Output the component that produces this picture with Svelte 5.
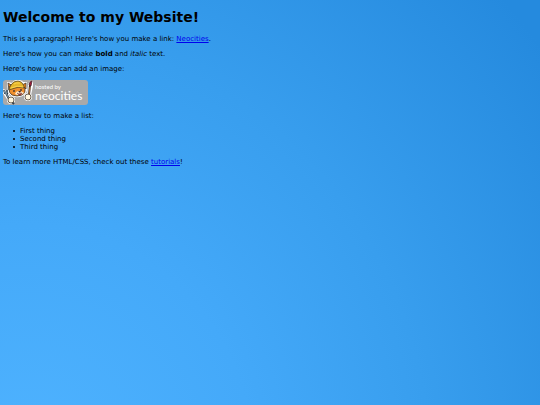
<script>
	const things = ['First thing', 'Second thing', 'Third thing'];
</script>

<svelte:head>
	<title>Welcome to my Website!</title>
</svelte:head>

<main>
	<h1>Welcome to my Website!</h1>

	<p>This is a paragraph! Here's how you make a link: <a href="https://neocities.org">Neocities</a>.</p>

	<p>Here's how you can make <strong>bold</strong> and <em>italic</em> text.</p>

	<p>Here's how you can add an image:</p>

	<svg class="badge" viewBox="0 0 85 25" role="img" aria-label="Hosted by Neocities">
		<rect width="85" height="25" rx="3" fill="#a9a9a9" />

		<!-- white sticker edge behind the cat -->
		<g fill="#fff" stroke="#fff" stroke-width="2" stroke-linejoin="round">
			<path d="m5 3 4 1q2-3 6-3 3 0 5 2l3 0 0 7q-1 5-7 6-7 1-10-4Z" />
			<path d="m27 3 2-1 0 4-2 9-2 0 1-10Z" />
			<path d="m1 10 3 3 3 6-2 0-4-6Z" />
			<circle cx="8" cy="20" r="3" />
			<circle cx="25" cy="17" r="3" />
		</g>

		<!-- head and ears -->
		<path d="m5 3 5 3-4 4ZM19 5l4-2v6Z" fill="#e98522" stroke="#41352b" stroke-width=".8" />
		<path d="M6 9q0-5 7-5 7 0 9 5 1 4-3 6-5 2-10 0-3-2-3-6Z" fill="#f08f2c" stroke="#41352b" stroke-width=".8" />
		<path d="M12 14q1-3 4-3 3 0 5 2-2 2-5 2-3 0-4-1Z" fill="#ffeacb" />

		<!-- helmet -->
		<path d="M8 5q2-4 7-4 4 0 6 5v2q-6-2-12 1l-3 1q0-2 2-5Z" fill="#e5b62b" stroke="#5c4820" stroke-width=".8" />
		<path d="m11 4 2-1 4 0M8 8q6-3 12-1" fill="none" stroke="#ffdc58" stroke-width=".8" />

		<!-- face -->
		<path d="M11 10v2M18 9v2" stroke="#292c35" stroke-width="1.2" />
		<path d="m15 11 3 0-1 2Z" fill="#40262c" />
		<path d="m14 13 2 1 3-1-1 2h-2Z" fill="#ba3b3f" stroke="#52302d" stroke-width=".4" />

		<!-- wrench and paw -->
		<path d="m1 10 1 3 2 0 0-3M3 13l3 6M9 22l2 2" fill="none" stroke="#303d4a" stroke-width="2" />
		<path d="m1 10 1 3 2 0 0-3M3 13l3 6" fill="none" stroke="#96b0be" stroke-width=".8" />
		<circle cx="8" cy="20" r="3" fill="#fff6df" stroke="#4a3d30" stroke-width=".8" />

		<!-- brush and paw -->
		<path d="m27 5-1 10" stroke="#3f2b28" stroke-width="2" />
		<path d="m27 7-1 8" stroke="#d38a35" stroke-width=".8" />
		<path d="m26 5 1-3 2-1-1 5Z" fill="#a71e39" stroke="#49222e" stroke-width=".8" />
		<circle cx="25" cy="17" r="3" fill="#fff6df" stroke="#4a3d30" stroke-width=".8" />

		<text class="host" x="32" y="9">hosted by</text>
		<text class="name" x="32" y="20">neocities</text>
	</svg>

	<p>Here's how to make a list:</p>

	<ul>
		{#each things as thing}
			<li>{thing}</li>
		{/each}
	</ul>

	<p>To learn more HTML/CSS, check out these <a href="https://neocities.org/tutorials">tutorials</a>!</p>
</main>

<style>
	:global(body) {
		margin: 0;
		min-height: 100vh;
		background: radial-gradient(ellipse 120% 170% at 5% 115%, #4fb3ff 0%, #44a9f9 35%, #389eee 62%, #258ade 100%)
			no-repeat fixed;
	}

	main {
		padding: 9px 3px;
		color: #000;
		font-family: Verdana, 'DejaVu Sans', sans-serif;
		font-size: 7px;
		line-height: 8px;
	}

	h1 {
		margin: 0 0 10px;
		font-size: 14px;
		line-height: 16px;
	}

	p,
	ul {
		margin: 7px 0;
	}

	ul {
		padding-left: 10px;
		list-style: none;
	}

	li {
		display: flex;
		align-items: center;
		gap: 5px;
	}

	li::before {
		content: '';
		width: 2px;
		height: 2px;
		border-radius: 50%;
		background: #000;
	}

	a {
		color: #00e;
		text-decoration: underline;
	}

	.badge {
		display: block;
		width: 85px;
		height: 25px;
	}

	.badge text {
		fill: #fff;
		font-family: Lato, sans-serif;
	}

	.badge .host {
		font-size: 6px;
	}

	.badge .name {
		font-size: 12px;
	}
</style>
